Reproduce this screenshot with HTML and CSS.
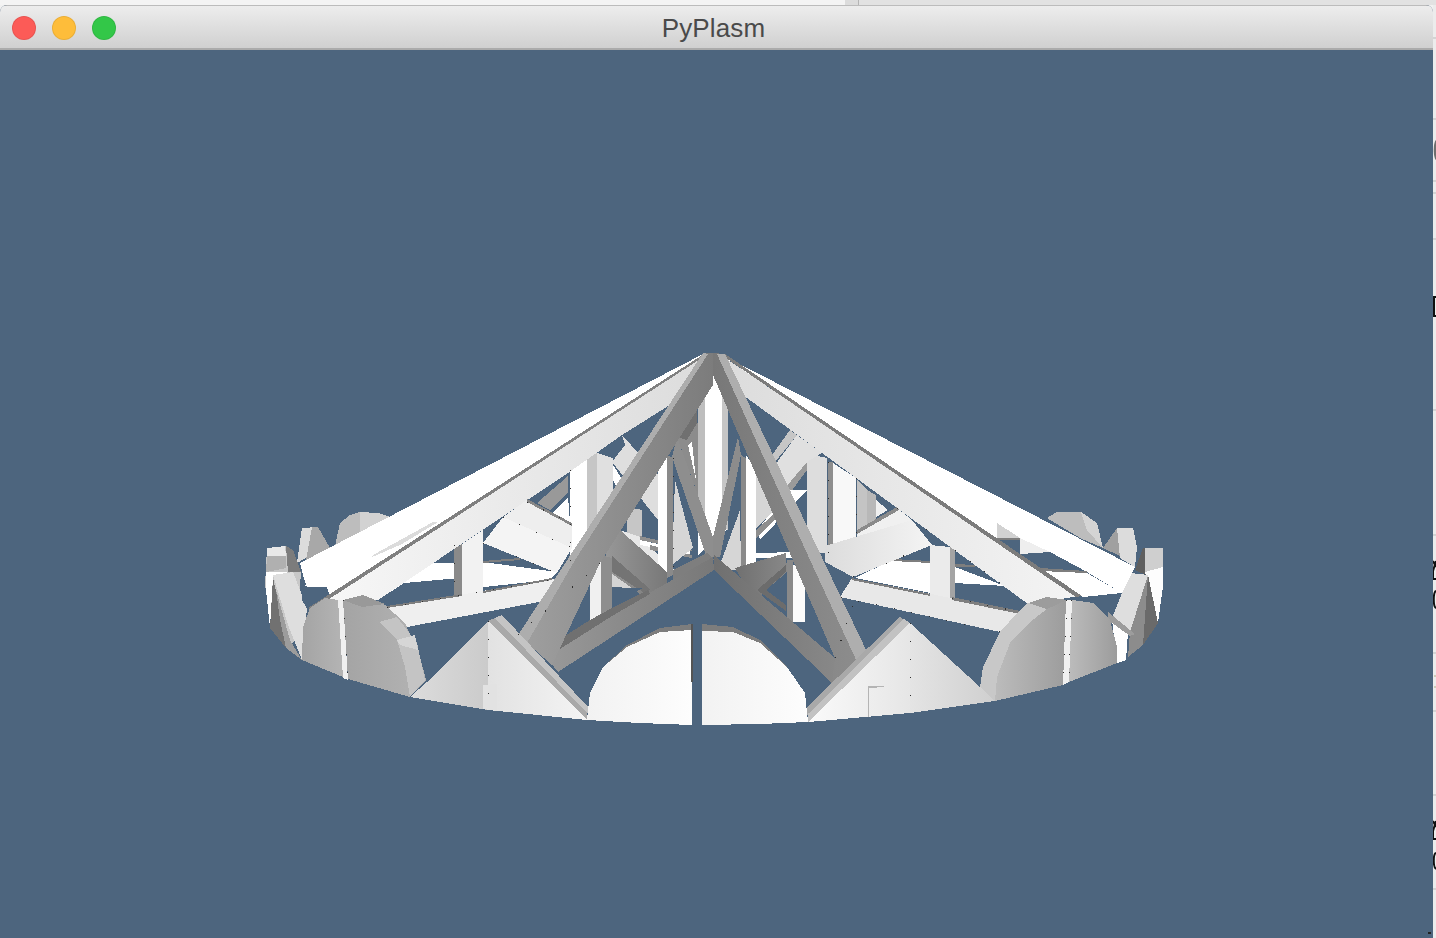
FILE: index.html
```html
<!DOCTYPE html>
<html lang="en">
<head>
    <meta charset="UTF-8">
    <meta name="viewport" content="width=device-width, initial-scale=1.0">
    <title>PyPlasm</title>
    <link rel="stylesheet" href="styles.css">
</head>
<body>
    <div id="top-strip">
        <span class="strip-left"></span>
        <span class="strip-mid"></span>
        <span class="strip-right"></span>
    </div>
    <div id="desktop">
        <div id="window">
            <header id="titlebar">
                <div id="lights">
                    <span class="light red"></span>
                    <span class="light yellow"></span>
                    <span class="light green"></span>
                </div>
                <span id="title">PyPlasm</span>
            </header>
            <svg id="scene" viewBox="0 50 1433 884" width="1433" height="884">
                <defs>
                    <linearGradient id="rafterL" x1="0" x2="1"><stop offset="0" stop-color="#f8f8f8"/><stop offset="1" stop-color="#dcdcdc"/></linearGradient>
                    <linearGradient id="rafterR" x1="0" x2="1"><stop offset="0" stop-color="#dcdcdc"/><stop offset="1" stop-color="#f4f4f4"/></linearGradient>
                    <linearGradient id="discL" x1="0" x2="1"><stop offset="0" stop-color="#a4a4a4"/><stop offset="1" stop-color="#b4b4b4"/></linearGradient>
                    <linearGradient id="discR" x1="0" x2="1"><stop offset="0" stop-color="#bcbcbc"/><stop offset="1" stop-color="#9c9c9c"/></linearGradient>
                    <linearGradient id="beamL" x1="0" x2="1"><stop offset="0" stop-color="#a0a0a0"/><stop offset="1" stop-color="#7c7c7c"/></linearGradient>
                    <linearGradient id="beamR" x1="0" x2="1"><stop offset="0" stop-color="#787878"/><stop offset="1" stop-color="#8e8e8e"/></linearGradient>
                    <linearGradient id="chordL" x1="0" x2="1"><stop offset="0" stop-color="#9a9a9a"/><stop offset="1" stop-color="#787878"/></linearGradient>
                    <linearGradient id="chordR" x1="0" x2="1"><stop offset="0" stop-color="#707070"/><stop offset="1" stop-color="#888888"/></linearGradient>
                    <linearGradient id="triL" x1="0" x2="1"><stop offset="0" stop-color="#dcdcdc"/><stop offset="1" stop-color="#cbcbcb"/></linearGradient>
                    <linearGradient id="triM" x1="0" x2="1"><stop offset="0" stop-color="#e2e2e2"/><stop offset="1" stop-color="#f4f4f4"/></linearGradient>
                    <linearGradient id="triR" x1="0" x2="1"><stop offset="0" stop-color="#fafafa"/><stop offset="1" stop-color="#e6e6e6"/></linearGradient>
                    <linearGradient id="triS" x1="0" x2="1"><stop offset="0" stop-color="#e4e4e4"/><stop offset="1" stop-color="#cfcfcf"/></linearGradient>
                    <linearGradient id="dome" x1="0" x2="1"><stop offset="0" stop-color="#f2f2f2"/><stop offset="1" stop-color="#fdfdfd"/></linearGradient>
                </defs>

                <!-- far rim, left -->
                <polygon fill="#bdbdbd" points="335,546 340,523 350,515 360,512 378,513 390,517 402,527 380,545"/>
                <polygon fill="#d2d2d2" points="360,512 378,513 390,517 402,527 370,540 360,535"/>
                <polygon fill="#dcdcdc" points="297,563 302,528 318,527 316,552"/>
                <polygon fill="#a8a8a8" points="312,527 318,527 330,548 306,560"/>
                <polygon fill="#c8c8c8" points="265,585 267,548 285,546 293,550 301,572 296,640 287,648 272,628"/>
                <polygon fill="#e8e8e8" points="267,548 285,546 286,556 267,560"/>
                <polygon fill="#b0b0b0" points="267,556 286,556 286,568 266,572"/>
                <polygon fill="#7c7c7c" points="286,546 293,550 301,572 288,572"/>
                <polygon fill="#ffffff" points="266,572 288,572 273,577 270,628 266,590"/>
                <polygon fill="#717171" points="273,578 282,618 286,648 270,628"/>
                <polygon fill="#9c9c9c" points="276,590 290,640 302,660 286,648 280,620"/>
                <polygon fill="#dedede" points="273,575 293,572 307,608 302,660 288,625"/>

                <!-- far rim, right -->
                <polygon fill="#bdbdbd" points="1047,518 1057,512 1080,512 1097,523 1103,548 1080,538"/>
                <polygon fill="#d4d4d4" points="1081,512 1097,523 1103,548 1087,530"/>
                <polygon fill="#a0a0a0" points="1103,548 1117,528 1120,556"/>
                <polygon fill="#dcdcdc" points="1117,528 1133,528 1137,547 1135,567 1120,558"/>
                <polygon fill="#5f5f5f" points="1135,570 1143,548 1146,548 1146,575"/>
                <polygon fill="#cfcfcf" points="1145,548 1163,548 1163,567 1145,572"/>
                <polygon fill="#fdfdfd" points="1145,572 1163,567 1163,586 1158,623"/>
                <polygon fill="#ffffff" points="1112,620 1128,632 1126,660 1117,663"/>
                <polygon fill="#8c8c8c" points="1148,575 1158,623 1143,645 1128,657 1130,632"/>
                <polygon fill="#6a6a6a" points="1148,575 1158,623 1143,645"/>
                <polygon fill="#dedede" points="1130,573 1148,575 1130,632 1112,618"/>
                <polygon fill="#9c9c9c" points="1108,612 1135,634 1130,636 1108,620"/>

                <!-- back chords, white -->
                <polygon fill="#ffffff" points="304,586 346,566 483,562 557,572 550,580 400,596"/>
                <polygon fill="#4d657e" points="347,567 368,557 370,566"/>
                <polygon fill="#4d657e" points="303,588 327,587 308,610 302,600"/>
                <polygon fill="#4d657e" points="378,600 404,583 460,578 462,595 387,607"/>
                <polygon fill="#7e7e7e" points="483,561 520,558 520,560 483,563"/>
                <polygon fill="#ffffff" points="855,578 892,560 930,562 930,593"/>
                <polygon fill="#7e7e7e" points="892,559 930,561 930,563 892,561"/>
                <polygon fill="#ffffff" points="955,567 1005,586 955,583"/>
                <polygon fill="#7e7e7e" points="955,564 975,565 975,567 955,567"/>

                <!-- white top bands -->
                <polygon fill="#ffffff" points="300,563 705,353 711,356 330,596 327,587 307,587 303,575"/>
                <polygon fill="#dcdcdc" points="373,555 433,522 438,522 402,544 370,558"/>
                <polygon fill="#ffffff" points="718,353 1135,567 1122,593 1087,572 1050,552 1020,538 997,523 997,541"/>
                <polygon fill="#ffffff" points="1040,570 1087,573 1122,593 1083,597"/>
                <polygon fill="#eeeeee" points="1020,538 1050,552 1020,554"/>
                <polygon fill="#7e7e7e" points="1040,568 1087,571 1087,573 1040,571"/>
                <polygon fill="#d2d2d2" points="997,523 1020,538 997,539"/>
                <polygon fill="#7e7e7e" points="997,538 1020,538 1020,540 997,540"/>

                <!-- middle of the roof, left half -->
                <polygon fill="#4d657e" points="528,500 568,472 568,523"/>
                <polygon fill="#999999" points="537,503 568,476 568,492 550,510"/>
                <polygon fill="#ffffff" points="553,513 568,497 570,522"/>
                <polygon fill="#ffffff" points="570,470 587,458 587,570 570,565"/>
                <polygon fill="#c6c6c6" points="587,458 597,453 597,535 587,548"/>
                <polygon fill="#e0e0e0" points="597,453 613,458 613,505 597,528"/>
                <polygon fill="#dedede" points="622,435 658,475 658,520 612,462 625,445"/>
                <polygon fill="#ffffff" points="613,465 624,482 618,490 613,480"/>
                <polygon fill="#c6c6c6" points="627,507 642,510 642,537 627,535"/>
                <polygon fill="#e8e8e8" points="620,530 640,537 675,570 667,575"/>
                <polygon fill="#8e8e8e" points="640,536 690,548 692,551 640,540"/>
                <polygon fill="#ffffff" points="640,540 690,551 690,555 640,545"/>
                <polygon fill="#8e8e8e" points="650,545 692,555 692,558 650,550"/>

                <!-- middle of the roof, right half -->
                <polygon fill="#dddddd" points="807,454 827,458 827,553 807,553"/>
                <polygon fill="#8e8e8e" points="828,462 833,462 833,553 828,553"/>
                <polygon fill="#f8f8f8" points="833,463 856,478 856,550 833,552"/>
                <polygon fill="#4d657e" points="857,525 882,510 898,508 857,533"/>
                <polygon fill="#c4c4c4" points="857,480 867,490 867,530 857,530"/>
                <polygon fill="#b8b8b8" points="867,490 876,495 876,520 867,525"/>
                <polygon fill="#f0f0f0" points="876,500 888,510 876,517"/>
                <polygon fill="#c6c6c6" points="790,430 797,435 775,462 770,458"/>
                <polygon fill="#e0e0e0" points="797,435 822,453 807,462 788,487 775,465"/>
                <polygon fill="#9a9a9a" points="807,462 807,470 790,493 786,487"/>
                <polygon fill="#ffffff" points="790,490 807,490 760,540 757,530"/>
                <polygon fill="#d6d6d6" points="756,470 772,480 784,500 756,528"/>
                <polygon fill="#8e8e8e" points="756,530 790,500 790,505 756,538"/>
                <polygon fill="#ffffff" points="755,553 800,552 800,558 755,558"/>
                <polygon fill="#f4f4f4" points="826,548 833,548 833,558 826,558"/>

                <!-- light rafters with grey top line -->
                <polygon fill="url(#rafterL)" points="311,607 707,354 700,362 673,403 622,435 568,473 505,515 378,600"/>
                <polygon fill="#808080" points="308,608 704,354 708,354 312,610"/>
                <polygon fill="url(#rafterR)" points="722,356 1080,596 1028,604 897,508 743,395"/>
                <polygon fill="#7c7c7c" points="720,354 725,354 1082,596 1076,597"/>

                <!-- left side truss -->
                <polygon fill="#eeeeee" points="527,500 572,523 572,548 503,517"/>
                <polygon fill="#f4f4f4" points="503,517 572,548 557,573 483,543"/>
                <polygon fill="#868686" points="527,499 572,523 572,526 527,502"/>
                <polygon fill="#8a8a8a" points="454,549 462,544 462,595 454,595"/>
                <polygon fill="#f2f2f2" points="462,544 483,530 483,593 462,597"/>
                <polygon fill="#efefef" points="387,607 560,578 560,598 407,627"/>
                <polygon fill="#7e7e7e" points="387,606 462,594 462,596 387,608"/>
                <polygon fill="#7e7e7e" points="483,591 552,578 552,580 483,593"/>

                <!-- right side truss -->
                <polygon fill="#f0f0f0" points="857,532 897,508 912,520 857,548"/>
                <polygon fill="#8a8a8a" points="857,530 897,507 899,510 857,534"/>
                <polygon fill="url(#rafterR)" points="912,520 932,545 853,577 825,562 825,546"/>
                <polygon fill="#ebebeb" points="930,545 950,547 950,598 930,595"/>
                <polygon fill="#a4a4a4" points="950,547 955,550 955,598 950,598"/>
                <polygon fill="#e8e8e8" points="840,597 852,578 1020,612 1000,632"/>
                <polygon fill="#7e7e7e" points="852,578 930,594 930,596 852,580"/>
                <polygon fill="#7e7e7e" points="952,597 1020,611 1020,614 952,600"/>

                <!-- centre posts and inner grey struts -->
                <polygon fill="#ffffff" points="698,380 713,360 713,540 698,555"/>
                <polygon fill="#bebebe" points="698,385 705,385 705,540 698,520"/>
                <polygon fill="#ffffff" points="713,360 727,380 727,530 713,540"/>
                <polygon fill="#c6c6c6" points="722,385 728,390 728,530 722,525"/>
                <polygon fill="#d6d6d6" points="675,480 693,548 672,565"/>
                <polygon fill="#d6d6d6" points="740,510 718,570 741,570"/>
                <polygon fill="#8c8c8c" points="677,437 698,423 698,495"/>
                <polygon fill="#ffffff" points="688,445 692,442 696,480"/>
                <polygon fill="#707070" points="677,437 697,408 697,423 687,440"/>
                <polygon fill="#8e8e8e" points="677,437 713,537 713,557 707,558 672,457"/>
                <polygon fill="#8c8c8c" points="738,437 741,455 720,557 713,557 713,537"/>
                <polygon fill="#ffffff" points="658,458 667,455 667,578 658,572"/>
                <polygon fill="#8a8a8a" points="667,455 673,458 673,575 667,578"/>
                <polygon fill="#8a8a8a" points="741,455 746,458 746,572 741,575"/>
                <polygon fill="#ffffff" points="746,455 756,470 756,570 746,570"/>

                <!-- small braces -->
                <polygon fill="url(#chordL)" points="620,530 667,572 667,598 643,596 612,575 600,537"/>
                <polygon fill="#747474" points="612,556 651,590 643,592 612,572"/>
                <polygon fill="#d4d4d4" points="612,574 632,588 612,587"/>
                <polygon fill="#4d657e" points="612,588 643,588 612,605"/>
                <polygon fill="#7e7e7e" points="673,570 707,553 714,560 673,592"/>
                <polygon fill="url(#chordR)" points="735,568 786,553 787,572 766,590 755,602"/>
                <polygon fill="#f0f0f0" points="590,558 601,555 601,620 590,622"/>
                <polygon fill="#8e8e8e" points="601,555 612,558 612,615 601,620"/>
                <polygon fill="#8a8a8a" points="787,560 793,560 793,622 787,620"/>
                <polygon fill="#fbfbfb" points="793,565 805,565 805,622 793,622"/>

                <!-- main grey rafters -->
                <polygon fill="url(#chordL)" points="713,557 543,653 558,672 714,570"/>
                <polygon fill="#707070" points="546,648 590,620 612,608 648,590 650,594 612,616 590,630 552,654"/>
                <polygon fill="url(#chordR)" points="714,555 835,658 832,683 714,570"/>
                <polygon fill="#4d657e" points="766,590 787,572 787,604"/>
                <polygon fill="#6c6c6c" points="757,590 786,565 786,572 766,590 786,605 786,611"/>
                <polygon fill="url(#beamL)" points="703,353 713,353 713,385 600,563 552,665 518,635"/>
                <polygon fill="#adadad" points="703,353 708,354 575,560 527,643 518,635"/>
                <polygon fill="url(#beamR)" points="713,353 725,354 868,654 850,672 832,683 835,658 713,375"/>
                <polygon fill="#aeaeae" points="725,354 868,654 858,664 810,560 717,354"/>

                <!-- front half discs -->
                <polygon fill="url(#discL)" points="302,660 303,627 310,608 325,598 338,600 343,677"/>
                <polygon fill="#f0f0f0" points="338,600 343,600 348,680 343,678"/>
                <polygon fill="url(#discL)" points="343,600 363,595 385,605 405,623 420,657 426,680 410,697 348,679"/>
                <polygon fill="#999999" points="343,600 363,595 385,604 362,607"/>
                <polygon fill="#c4c4c4" points="379,622 397,617 417,643 425,680 410,697 405,667 397,640"/>
                <polygon fill="#d6d6d6" points="397,640 415,635 418,650 400,645"/>

                <polygon fill="#c8c8c8" points="980,687 983,667 1000,632 1018,612 1028,603 1047,609 1030,622 1010,643 997,677 995,701"/>
                <polygon fill="#9c9c9c" points="1028,603 1047,597 1067,600 1047,609"/>
                <polygon fill="url(#discR)" points="1047,609 1067,600 1063,685 995,701 997,677 1010,643 1030,622"/>
                <polygon fill="#f0f0f0" points="1066,600 1072,600 1069,682 1063,685"/>
                <polygon fill="url(#discR)" points="1072,600 1093,603 1110,620 1117,647 1117,663 1069,682"/>

                <!-- rim band, lower front triangles -->
                <polygon fill="url(#triL)" points="410,697 427,682 488,621 488,710"/>
                <polygon fill="url(#triM)" points="488,621 587,720 488,710"/>
                <polygon fill="#a9a9a9" points="488,621 502,615 588,707 587,720"/>
                <polygon fill="#c4c4c4" points="495,618 502,615 588,707 588,714"/>
                <polygon fill="#e2e2e2" points="483,685 497,684 497,711 483,709"/>
                <polygon fill="url(#triR)" points="910,623 910,713 820,721 808,722"/>
                <polygon fill="url(#triS)" points="910,623 980,687 995,701 910,713"/>
                <polygon fill="#a9a9a9" points="900,617 910,623 808,722 807,707"/>
                <polygon fill="#c2c2c2" points="904,619 910,623 808,722 808,714"/>
                <polygon fill="#b4b4b4" points="868,686 884,686 884,687 869,688 869,717 868,717"/>

                <!-- centre dome -->
                <polygon fill="#7d7d7d" points="627,645 660,628 692,624 692,632 660,634 627,649 600,670"/>
                <polygon fill="url(#dome)" points="587,720 590,693 603,667 627,647 660,632 692,630 692,725 640,723"/>
                <polygon fill="#545454" points="691,624 693,624 693,682 691,682"/>
                <polygon fill="#7d7d7d" points="702,624 733,627 760,640 787,667 760,645 733,634 702,632"/>
                <polygon fill="url(#dome)" points="702,631 733,632 760,643 787,667 805,693 808,722 760,724 702,725"/>

                <!-- z-fighting specks along the edges -->
                <path class="specks" d="M503 517L572 548M527 502L570 523M483 543L557 573M387 608L552 580M853 577L930 545M952 598L1020 612M1000 632L840 597M897 508L1028 603M488 621V705M910 623V713M343 600L348 679M1067 600L1063 685"/>
                <path class="specks" d="M454 545V595M570 470V565M673 458V575M856 478V550M828 462V553M1072 600L1069 682M600 563L518 635M835 658L855 600"/>
                <polygon fill="#222222" points="1428,932 1431,932 1431,934 1428,934"/>
            </svg>
        </div>
        <aside id="behind">
            <svg viewBox="0 0 3 889" width="3" height="889">
                <g class="rules">
                    <path d="M0 33H3M0 114H3M0 176H3M0 188H3M0 234H3M0 405H3M0 530H3M0 648H3M0 706H3M0 790H3M0 884H3"/>
                </g>
                <path class="blob" d="M3 135C0 137 0 153 3 155Z"/>
                <path class="ink" d="M0 292H3M1 292V311M0 311H3M0 556L3 562M3 556L0 566V574H3M3 586C0 587 0 602 3 603M0 816L3 822M3 816L0 826V834H3M3 848C0 849 0 862 3 864"/>
                <path class="tan" d="M2 670V684"/>
            </svg>
        </aside>
    </div>
</body>
</html>
```

FILE: styles.css
```css
* {
    box-sizing: border-box;
}

html, body {
    margin: 0;
    padding: 0;
    height: 938px;
    overflow: hidden;
    background-color: #f1f1f1;
}

#top-strip {
    display: flex;
    height: 5px;
}

.strip-left {
    flex: 0 0 845px;
    background-color: #f4f4f4;
}

.strip-mid {
    flex: 0 0 14px;
    background-color: #dcdcdc;
    border-right: 1px solid #b4b4b4;
}

.strip-right {
    flex: 1;
    background-color: #e2e2e2;
}

#desktop {
    display: flex;
    height: 933px;
}

#window {
    width: 1433px;
    overflow: hidden;
    border-radius: 7px 7px 0 0;
    background-color: #4d657e;
}

#titlebar {
    position: relative;
    display: flex;
    align-items: center;
    justify-content: center;
    height: 45px;
    padding: 3px 6px 0 0;
    border-top: 1px solid #bcbcbc;
    border-bottom: 2px solid #ababab;
    background: linear-gradient(#ededed, #d0d0d0);
}

#lights {
    position: absolute;
    left: 12px;
    top: 10px;
    display: flex;
    gap: 16px;
}

.light {
    width: 24px;
    height: 24px;
    border-radius: 50%;
    border: 1px solid rgba(0, 0, 0, 0.08);
}

.red {
    background-color: #fc5b57;
}

.yellow {
    background-color: #febd3a;
}

.green {
    background-color: #33c748;
}

#title {
    font-family: "Liberation Sans", sans-serif;
    font-size: 26px;
    letter-spacing: 0.15px;
    color: #4a4a4a;
}

#scene {
    display: block;
    shape-rendering: crispEdges;
}

.specks {
    fill: none;
    stroke: #2e2e2e;
    stroke-width: 1;
    stroke-dasharray: 1 17;
}

#behind {
    width: 3px;
    background-color: #ececec;
}

#behind svg {
    display: block;
}

.rules {
    fill: none;
    stroke: #bbbbbb;
    stroke-width: 1;
}

.blob {
    fill: #6e6e6e;
}

.ink {
    fill: none;
    stroke: #101010;
    stroke-width: 2;
}

.tan {
    fill: none;
    stroke: #b4ad86;
    stroke-width: 1;
    stroke-dasharray: 2 9;
}
```
